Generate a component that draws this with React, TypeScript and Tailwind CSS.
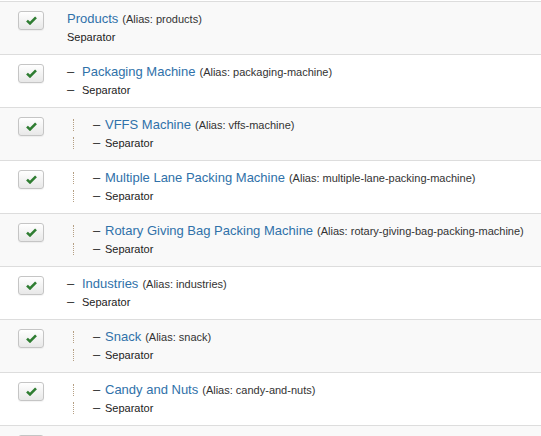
const items = [
  { title: "Products", alias: "products", level: 1 },
  { title: "Packaging Machine", alias: "packaging-machine", level: 2 },
  { title: "VFFS Machine", alias: "vffs-machine", level: 3 },
  { title: "Multiple Lane Packing Machine", alias: "multiple-lane-packing-machine", level: 3 },
  { title: "Rotary Giving Bag Packing Machine", alias: "rotary-giving-bag-packing-machine", level: 3 },
  { title: "Industries", alias: "industries", level: 2 },
  { title: "Snack", alias: "snack", level: 3 },
  { title: "Candy and Nuts", alias: "candy-and-nuts", level: 3 },
];

function PublishButton() {
  return (
    <button className="w-[26px] h-[19px] rounded-[3px] border border-[#c5c5c5] bg-gradient-to-b from-white to-[#e8e8e8] flex items-center justify-center shadow-[0_1px_1px_rgba(0,0,0,0.05)]">
      <svg width="11" height="9" viewBox="0 0 11 9">
        <path d="M1 4.6 L4 7.4 L10 1.4" fill="none" stroke="#2f7d32" strokeWidth="2.6" />
      </svg>
    </button>
  );
}

function Dots() {
  return <span className="inline-block w-0 h-[12px] border-l border-dotted border-[#b59f83]" />;
}

function Prefix({ level }: { level: number }) {
  if (level === 1) return null;
  if (level === 2) return <span className="text-[#333] text-[13px] w-[15px] shrink-0">–</span>;
  return (
    <>
      <span className="w-[6px] shrink-0" />
      <Dots />
      <span className="w-[19px] shrink-0" />
      <span className="text-[#333] text-[13px] w-[12px] shrink-0">–</span>
    </>
  );
}

function Row({ item, striped }: { item: (typeof items)[number]; striped: boolean }) {
  return (
    <div className={`flex border-t border-[#ddd] h-[53px] ${striped ? "bg-[#f9f9f9]" : "bg-white"}`}>
      <div className="w-[67px] shrink-0 pl-[18px] pt-[9px]">
        <PublishButton />
      </div>
      <div className="pt-[8px] flex flex-col">
        <div className="flex items-center h-[18px]">
          <Prefix level={item.level} />
          <a className="text-[13px] text-[#3071a9] leading-[18px]">{item.title}</a>
          <span className="text-[11px] text-[#333] ml-[4px] leading-[18px]">(Alias: {item.alias})</span>
        </div>
        <div className="flex items-center h-[18px] text-[11px] text-[#222]">
          <Prefix level={item.level} />
          <span>Separator</span>
        </div>
      </div>
    </div>
  );
}

export default function App() {
  return (
    <div className="w-[541px] h-[436px] overflow-hidden bg-white pt-px" style={{ fontFamily: '"Liberation Sans", Arial, sans-serif' }}>
      {items.map((item, i) => (
        <Row key={item.alias} item={item} striped={i % 2 === 0} />
      ))}
      <div className="flex border-t border-[#ddd] h-[53px] bg-[#f9f9f9]">
        <div className="w-[67px] shrink-0 pl-[18px] pt-[9px]">
          <PublishButton />
        </div>
      </div>
    </div>
  );
}
